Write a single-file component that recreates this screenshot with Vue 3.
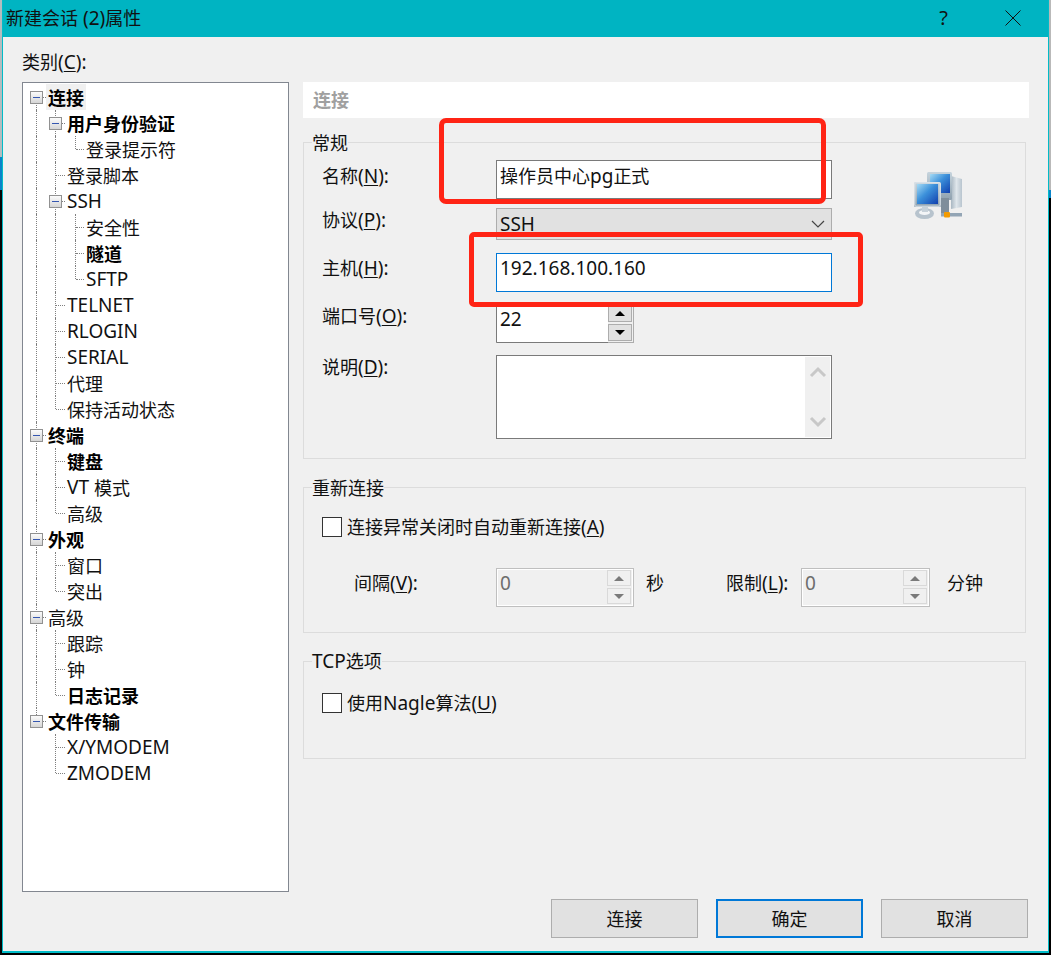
<script setup>
const source = [
  ['连接', 0, true, true], ['用户身份验证', 1, true, true], ['登录提示符', 2], ['登录脚本', 1],
  ['SSH', 1, false, true], ['安全性', 2], ['隧道', 2, true], ['SFTP', 2], ['TELNET', 1], ['RLOGIN', 1],
  ['SERIAL', 1], ['代理', 1], ['保持活动状态', 1], ['终端', 0, true, true], ['键盘', 1, true], ['VT 模式', 1],
  ['高级', 1], ['外观', 0, true, true], ['窗口', 1], ['突出', 1], ['高级', 0, false, true], ['跟踪', 1],
  ['钟', 1], ['日志记录', 1, true], ['文件传输', 0, true, true], ['X/YMODEM', 1], ['ZMODEM', 1]
]
const columns = [13, 32, 52]
const textLeft = [25, 44, 63]
const boxLeft = [7, 26]
const elbow = [[20, 3], [33, 9], [53, 8]]

const hasNext = (i, c) => {
  for (let j = i + 1; j < source.length; j++) {
    if (source[j][1] < c) return false
    if (source[j][1] === c) return true
  }
  return false
}

const splitParts = (label) =>
  label.match(/[\x00-\x7f]+|[^\x00-\x7f]+/g).map((t) => ({ t, lat: /^[\x00-\x7f]/.test(t) }))

const rows = source.map(([label, level, bold, box], i) => {
  const guides = []
  for (let c = 0; c <= level; c++) {
    const next = hasNext(i, c)
    if (c < level && next) guides.push({ x: columns[c], kind: 'full' })
    if (c === level) {
      if (i > 0) guides.push({ x: columns[c], kind: next ? 'full' : 'top' })
      else guides.push({ x: columns[c], kind: 'bottom' })
    }
  }
  return {
    parts: splitParts(label), bold, box, selected: i === 0, guides,
    text: textLeft[level], boxAt: boxLeft[level],
    elbowX: elbow[level][0], elbowW: elbow[level][1]
  }
})
</script>

<template>
  <div class="page">
    <div class="strip strip-left"></div>
    <div class="dialog">
      <header class="titlebar">
        <span class="title">新建会话<span class="lat"> (2)</span>属性</span>
        <span class="help">?</span>
        <svg class="close" width="16" height="16" viewBox="0 0 16 16">
          <path d="M.5.5l15 15M15.5.5l-15 15" stroke="#111" stroke-width="1" fill="none" />
        </svg>
      </header>

      <div class="main">
        <section class="left">
          <div class="cat-label">类别<span class="lat">(<u>C</u>):</span></div>
          <div class="tree">
            <div v-for="(row, i) in rows" :key="i" class="row">
              <i v-for="(g, k) in row.guides" :key="k" class="guide" :class="g.kind" :style="{ left: g.x + 'px' }"></i>
              <i class="elbow" :style="{ left: row.elbowX + 'px', width: row.elbowW + 'px' }"></i>
              <span v-if="row.box" class="box" :style="{ left: row.boxAt + 'px' }"><b></b></span>
              <span class="node" :class="{ bold: row.bold, selected: row.selected }" :style="{ left: row.text + 'px' }"><span v-for="(p, k) in row.parts" :key="k" :class="{ lat: p.lat }">{{ p.t }}</span></span>
            </div>
          </div>
        </section>

        <section class="right">
          <div class="heading">连接</div>

          <div class="group group-general">
            <div class="legend">常规</div>
            <div class="form">
              <div class="frow r-name">
                <label class="lab">名称<span class="lat">(<u>N</u>):</span></label>
                <div class="input wide tall">操作员中心<span class="lat">pg</span>正式</div>
              </div>
              <div class="frow r-proto">
                <label class="lab">协议<span class="lat">(<u>P</u>):</span></label>
                <div class="combo wide">
                  <span class="lat">SSH</span>
                  <svg width="14" height="8" viewBox="0 0 14 8"><path d="M1 1l6 6 6-6" fill="none" stroke="#444" stroke-width="1.2" /></svg>
                </div>
              </div>
              <div class="frow r-host">
                <label class="lab">主机<span class="lat">(<u>H</u>):</span></label>
                <div class="input wide tall focus"><span class="lat">192.168.100.160</span></div>
              </div>
              <div class="frow r-port">
                <label class="lab">端口号<span class="lat">(<u>O</u>):</span></label>
                <div class="spin">
                  <div class="spin-text"><span class="lat">22</span></div>
                  <div class="spin-btns">
                    <span class="sb"><i class="up"></i></span>
                    <span class="sb"><i class="down"></i></span>
                  </div>
                </div>
              </div>
              <div class="frow r-desc">
                <label class="lab">说明<span class="lat">(<u>D</u>):</span></label>
                <div class="memo wide">
                  <div class="scroll">
                    <svg width="18" height="12" viewBox="0 0 18 12"><path d="M2 10l7-7 7 7" fill="none" stroke="#c8c8c8" stroke-width="3" /></svg>
                    <svg width="18" height="12" viewBox="0 0 18 12"><path d="M2 2l7 7 7-7" fill="none" stroke="#c8c8c8" stroke-width="3" /></svg>
                  </div>
                </div>
              </div>
            </div>
            <svg class="net-icon" width="50" height="50" viewBox="0 0 50 50">
              <defs>
                <linearGradient id="scr" x1="0" y1="0" x2="1" y2="1">
                  <stop offset="0" stop-color="#a5dbf5" />
                  <stop offset=".45" stop-color="#3b90da" />
                  <stop offset="1" stop-color="#1240ae" />
                </linearGradient>
                <linearGradient id="bez" x1="0" y1="0" x2="0" y2="1">
                  <stop offset="0" stop-color="#c6d4dd" />
                  <stop offset="1" stop-color="#8fa1af" />
                </linearGradient>
                <linearGradient id="twr" x1="0" y1="0" x2="1" y2="0">
                  <stop offset="0" stop-color="#a9b7c2" />
                  <stop offset=".5" stop-color="#dfe6eb" />
                  <stop offset="1" stop-color="#b9c5cf" />
                </linearGradient>
                <filter id="soft"><feGaussianBlur stdDeviation=".3" /></filter>
              </defs>
              <g filter="url(#soft)">
                <path d="M38 4l11 3v28l-11 2z" fill="url(#twr)" />
                <rect x="14" y="0" width="25" height="28" rx="1.5" fill="url(#bez)" />
                <rect x="17" y="2" width="20" height="19" fill="url(#scr)" />
                <rect x="28" y="26" width="8" height="15" fill="#7f8e9b" />
                <rect x="28" y="41" width="21" height="3.5" fill="#93a5b5" />
                <ellipse cx="11.5" cy="41.5" rx="9.5" ry="5.5" fill="#b7c3cd" />
                <ellipse cx="11.5" cy="40.5" rx="5.5" ry="2.6" fill="#f3f5f7" />
                <rect x="9" y="34" width="6" height="6" fill="#c7d1d9" />
                <rect x="1" y="10" width="27" height="25" rx="1.5" fill="url(#bez)" />
                <rect x="1.8" y="10.8" width="25.4" height="23.4" rx="1" fill="none" stroke="#e3e9ee" stroke-width="1" />
                <rect x="4" y="12" width="21" height="20" fill="url(#scr)" />
                <rect x="31" y="40" width="6" height="5.5" rx="1" fill="#f29a06" />
              </g>
            </svg>
          </div>

          <div class="group group-retry">
            <div class="legend">重新连接</div>
            <div class="check-row cr-a">
              <span class="check"></span>
              <span>连接异常关闭时自动重新连接<span class="lat">(<u>A</u>)</span></span>
            </div>
            <div class="retry-row">
              <label class="r-lab1">间隔<span class="lat">(<u>V</u>):</span></label>
              <div class="spin dis s1">
                <div class="spin-text"><span class="lat">0</span></div>
                <div class="spin-btns">
                  <span class="sb"><i class="up"></i></span>
                  <span class="sb"><i class="down"></i></span>
                </div>
              </div>
              <span class="unit1">秒</span>
              <label class="r-lab2">限制<span class="lat">(<u>L</u>):</span></label>
              <div class="spin dis s2">
                <div class="spin-text"><span class="lat">0</span></div>
                <div class="spin-btns">
                  <span class="sb"><i class="up"></i></span>
                  <span class="sb"><i class="down"></i></span>
                </div>
              </div>
              <span class="unit2">分钟</span>
            </div>
          </div>

          <div class="group group-tcp">
            <div class="legend legend-tcp"><span class="lat">TCP</span>选项</div>
            <div class="check-row cr-b">
              <span class="check"></span>
              <span>使用<span class="lat">Nagle</span>算法<span class="lat">(<u>U</u>)</span></span>
            </div>
          </div>
        </section>
      </div>

      <footer class="actions">
        <button class="btn">连接</button>
        <button class="btn primary">确定</button>
        <button class="btn">取消</button>
      </footer>
    </div>
    <div class="strip strip-right"></div>

    <div class="mark mark-a"></div>
    <div class="mark mark-b"></div>
  </div>
</template>

<style scoped>
.page {
  position: relative;
  display: flex;
  width: 1051px;
  height: 955px;
  overflow: hidden;
  background: #000;
  font-family: "Noto Sans", "Noto Sans CJK SC", sans-serif;
  font-size: 18px;
  line-height: 24px;
  color: #111;
}
.lat { font-size: 19px; line-height: 1; }
.strip { width: 2px; height: 955px; flex: none; }
.strip-left { background: linear-gradient(#b4bcbf 0 157px, #0a84c8 157px 190px, #050505 190px); }
.strip-right { background: linear-gradient(#b9b9b9 0 190px, #0a84c8 190px 198px, #000 198px); }
.dialog {
  width: 1047px;
  height: 953px;
  box-sizing: border-box;
  flex: none;
  background: #f0f0f0;
  border: 1px solid #00bcc8;
  border-width: 0 1px 2px 1px;
}
.titlebar {
  display: flex;
  align-items: center;
  height: 37px;
  padding: 0 27px 0 3px;
  background: #00b4c2;
}
.title { flex: 1; margin-top: -1px; }
.help { margin-right: 57px; font-size: 20px; margin-top: -1px; }
.close { display: block; margin-top: -2px; }

.main {
  display: grid;
  grid-template-columns: 267px 726px;
  column-gap: 14px;
  height: 842px;
  padding: 13px 0 0 19px;
}
.cat-label { height: 24px; margin-bottom: 8px; }
u { text-underline-offset: 2px; text-decoration-thickness: 1px; }
.tree {
  height: 810px;
  box-sizing: border-box;
  border: 1px solid #828790;
  background: #fff;
  padding-top: 1px;
}
.row { position: relative; height: 26px; }
.guide { position: absolute; width: 0; border-left: 1px dotted #808080; }
.guide.full { top: 0; bottom: 0; }
.guide.top { top: 0; height: 13px; }
.guide.bottom { top: 13px; bottom: 0; }
.elbow { position: absolute; top: 13px; height: 0; border-top: 1px dotted #808080; }
.box {
  position: absolute;
  top: 7px;
  width: 13px;
  height: 13px;
  box-sizing: border-box;
  border: 1px solid #919191;
  background: linear-gradient(#fbfbfb, #d6d6d6);
}
.box b {
  position: absolute;
  left: 2px;
  top: 5px;
  width: 7px;
  height: 1px;
  background: #3557b0;
}
.node {
  position: absolute;
  top: 0;
  height: 26px;
  line-height: 28px;
  white-space: nowrap;
  background: #fff;
}
.node .lat { vertical-align: 1px; }
.bold { font-weight: 700; color: #000; }
.selected { margin-left: -2px; padding: 0 2px; background: #f0f0f0; }

.right { padding-top: 32px; }
.heading {
  height: 36px;
  padding-left: 10px;
  line-height: 36px;
  background: #fff;
  color: #a0a0a0;
  font-weight: 700;
}
.group {
  position: relative;
  width: 723px;
  box-sizing: border-box;
  border: 1px solid #dcdcdc;
}
.group-general { height: 317px; margin-top: 24px; }
.group-retry { height: 146px; margin-top: 28px; }
.group-tcp { height: 98px; margin-top: 28px; }
.legend {
  width: fit-content;
  margin: -12px 0 0 8px;
  padding: 0;
  background: #f0f0f0;
}
.legend-tcp { margin-top: -13px; }
.form { padding: 5px 0 0 18px; }
.frow { display: flex; align-items: flex-start; }
.lab { width: 174px; flex: none; }
.r-name .lab { padding-top: 4px; }
.r-proto { margin-top: 9px; }
.r-host { margin-top: 13px; }
.r-host .lab { padding-top: 3px; }
.r-port { margin-top: 12px; }
.r-desc { margin-top: 12px; }
.wide { width: 336px; }
.input {
  box-sizing: border-box;
  border: 1px solid #7a7a7a;
  background: #fff;
  padding: 3px 0 0 3px;
}
.tall { height: 39px; }
.focus { border-color: #0078d7; padding-top: 2px; }
.combo {
  display: flex;
  align-items: center;
  justify-content: space-between;
  box-sizing: border-box;
  height: 32px;
  padding: 0 6px 0 3px;
  border: 1px solid #adadad;
  background: #e1e1e1;
}
.combo .lat { line-height: 24px; }
.spin {
  display: flex;
  width: 138px;
  height: 39px;
  box-sizing: border-box;
  border: 1px solid #adadad;
  border-left-color: #7a7a7a;
  border-top-color: #7a7a7a;
  background: #fff;
}
.spin-text {
  flex: 1;
  padding: 2px 0 0 3px;
  border-bottom: 1px solid #7a7a7a;
  margin-bottom: -1px;
}
.spin-btns {
  display: flex;
  flex-direction: column;
  gap: 2px;
  width: 24px;
  padding: 0 1px 1px 0;
  background: #f0f0f0;
}
.sb {
  flex: 1;
  display: flex;
  align-items: center;
  justify-content: center;
  border: 1px solid #adadad;
  background: #e1e1e1;
}
.up { border: 5px solid transparent; border-top: 0; border-bottom: 5px solid #000; width: 0; height: 0; }
.down { border: 5px solid transparent; border-bottom: 0; border-top: 5px solid #000; width: 0; height: 0; }
.dis {
  border-color: #bfbfbf;
  background: #f0f0f0;
  box-shadow: inset 0 0 0 1px #fff;
}
.dis .spin-text { color: #6d6d6d; border-bottom: 0; margin: 0; }
.dis .spin-btns { background: transparent; padding: 1px 2px 2px 0; }
.dis .sb { border-color: #d9d9d9; background: #f0f0f0; }
.dis .up { border-bottom-color: #7a7a7a; }
.dis .down { border-top-color: #7a7a7a; }
.s1 { width: 138px; }
.s2 { width: 129px; }
.memo {
  position: relative;
  display: flex;
  justify-content: flex-end;
  box-sizing: border-box;
  height: 84px;
  border: 1px solid #7a7a7a;
  background: #fff;
  padding: 1px;
}
.scroll {
  display: flex;
  flex-direction: column;
  justify-content: space-between;
  align-items: center;
  width: 25px;
  padding: 9px 0;
  box-sizing: border-box;
  background: #f0f0f0;
}
.scroll svg { display: block; }
.net-icon { position: absolute; left: 609px; top: 29px; }

.check-row { display: flex; align-items: center; padding-left: 18px; height: 24px; }
.cr-a { margin-top: 15px; }
.cr-b { margin-top: 18px; }
.check {
  width: 20px;
  height: 20px;
  box-sizing: border-box;
  border: 1px solid #333;
  background: #fff;
  margin-right: 5px;
  flex: none;
}
.retry-row { display: flex; align-items: flex-start; margin-top: 29px; padding-left: 50px; }
.r-lab1 { width: 142px; padding-top: 3px; flex: none; }
.r-lab2 { width: 75px; padding-top: 3px; flex: none; margin-left: -1px; }
.unit1 { width: 81px; margin-left: 12px; padding-top: 3px; flex: none; }
.unit2 { margin-left: 17px; padding-top: 3px; }

.actions {
  display: flex;
  justify-content: flex-end;
  gap: 18px;
  padding: 7px 20px 0 0;
}
.btn {
  width: 147px;
  height: 39px;
  padding: 0;
  border: 1px solid #adadad;
  background: #e1e1e1;
  font: inherit;
  color: #111;
}
.primary { border: 2px solid #0078d7; }

.mark {
  position: absolute;
  box-sizing: border-box;
  border: 5px solid #ff2415;
  border-radius: 7px;
  pointer-events: none;
}
.mark-a { left: 439px; top: 118px; width: 387px; height: 86px; }
.mark-b { left: 469px; top: 232px; width: 394px; height: 75px; border-radius: 5px; }
</style>

<style>
html, body { margin: 0; padding: 0; overflow: hidden; background: #000; }
</style>
